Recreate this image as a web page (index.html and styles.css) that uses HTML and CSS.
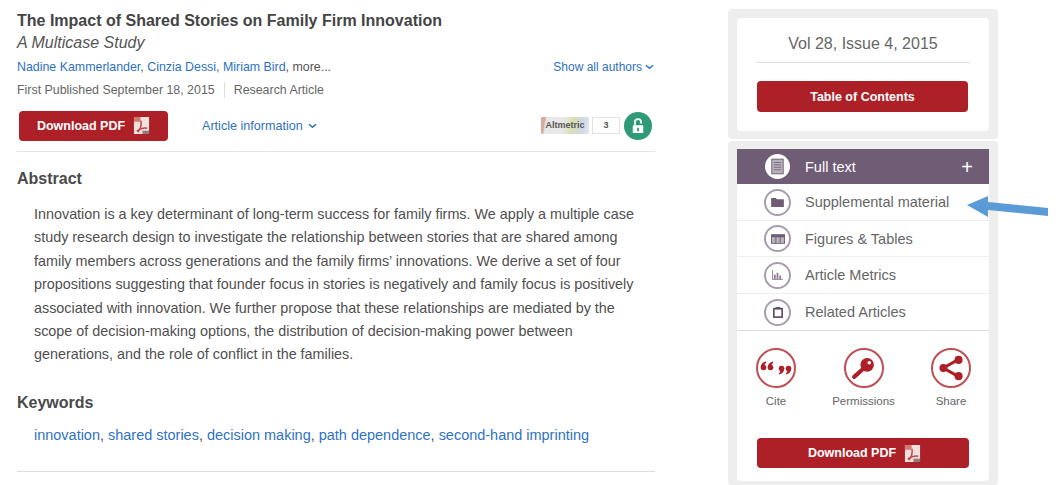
FILE: index.html
```html
<!DOCTYPE html>
<html lang="en">
<head>
<meta charset="utf-8">
<title>The Impact of Shared Stories on Family Firm Innovation</title>
<link rel="stylesheet" href="styles.css">
</head>
<body>
<div class="page">
  <main class="article">
    <h1 class="title">The Impact of Shared Stories on Family Firm Innovation</h1>
    <p class="subtitle">A Multicase Study</p>
    <div class="authors">
      <span class="names"><a>Nadine Kammerlander</a>, <a>Cinzia Dessi</a>, <a>Miriam Bird</a>, more...</span>
      <a class="show-all">Show all authors<svg class="chev" viewBox="0 0 10 6"><path d="M1 1l4 3.500L9 1" fill="none" stroke="currentColor" stroke-width="1.600"/></svg></a>
    </div>
    <div class="published"><span>First Published September 18, 2015</span><span class="type">Research Article</span></div>
    <div class="actions">
      <button class="btn btn-main">Download PDF
        <svg class="pdf" viewBox="0 0 18 20"><rect x="1" y="1" width="16" height="18" fill="#efe0dc"/><rect x="1" y="1" width="7" height="5" fill="#d07a74"/><path d="M5 17c3-3 4-8 3.500-12M4 16c4-3 8-4 11-3" fill="none" stroke="#c0454a" stroke-width="1.600"/><rect x="10" y="15.500" width="7" height="3.500" fill="#8b7f7d"/></svg>
      </button>
      <a class="info">Article information<svg class="chev" viewBox="0 0 10 6"><path d="M1 1l4 3.500L9 1" fill="none" stroke="currentColor" stroke-width="1.600"/></svg></a>
      <div class="metrics">
        <span class="alt">Altmetric</span><span class="count">3</span>
        <span class="lock"><svg viewBox="0 0 16 20" width="14" height="18"><path d="M4.500 9V5.500a3.500 3.500 0 0 1 7 0V7" fill="none" stroke="#fff" stroke-width="2"/><rect x="2" y="9" width="12" height="9" rx="1" fill="#fff"/><rect x="7" y="12" width="2" height="4" fill="#2f9a78"/></svg></span>
      </div>
    </div>
    <section class="block abstract">
      <h2 class="heading">Abstract</h2>
      <p class="abstract-text">Innovation is a key determinant of long-term success for family firms. We apply a multiple case<br>study research design to investigate the relationship between stories that are shared among<br>family members across generations and the family firms’ innovations. We derive a set of four<br>propositions suggesting that founder focus in stories is negatively and family focus is positively<br>associated with innovation. We further propose that these relationships are mediated by the<br>scope of decision-making options, the distribution of decision-making power between<br>generations, and the role of conflict in the families.</p>
    </section>
    <section class="block keywords">
      <h2 class="heading">Keywords</h2>
      <p class="kw"><a>innovation</a>, <a>shared stories</a>, <a>decision making</a>, <a>path dependence</a>, <a>second-hand imprinting</a></p>
    </section>
  </main>

  <aside class="side">
    <div class="panel panel-top">
      <div class="card card-issue">
        <div class="issue">Vol 28, Issue 4, 2015</div>
        <button class="btn btn-toc">Table of Contents</button>
      </div>
    </div>
    <div class="panel panel-bottom">
      <div class="card card-nav">
        <ul class="nav">
          <li class="nav-item active">
            <span class="ico"><svg viewBox="0 0 16 20" width="13" height="17"><rect x="1" y="1" width="14" height="18" fill="#b9b2bb" stroke="#6f5d75" stroke-width="1.200"/><path d="M3.500 5h9M3.500 8h9M3.500 11h9M3.500 14h9" stroke="#6f5d75" stroke-width="1"/></svg></span>
            <span>Full text</span><span class="plus">+</span>
          </li>
          <li class="nav-item">
            <span class="ico"><svg viewBox="0 0 14 11" width="13" height="10"><path d="M0 1h5l1.500 1.500H14V11H0z" fill="#6f5d75"/></svg></span>
            <span>Supplemental material</span>
          </li>
          <li class="nav-item">
            <span class="ico"><svg viewBox="0 0 16 11" width="14" height="10"><rect width="16" height="11" fill="#6f5d75"/><path d="M1 3.500h14V10H1z" fill="#b9b2bb"/><path d="M5.500 3v8M10.500 3v8" stroke="#6f5d75"/></svg></span>
            <span>Figures &amp; Tables</span>
          </li>
          <li class="nav-item">
            <span class="ico"><svg viewBox="0 0 12 11" width="11" height="10"><path d="M.5 0v10.500H12" fill="none" stroke="#8d7f93"/><path d="M2 5h2v5H2zM5 3h2v7H5zM8 6h2v4H8z" fill="#8d7f93"/></svg></span>
            <span>Article Metrics</span>
          </li>
          <li class="nav-item">
            <span class="ico"><svg viewBox="0 0 12 13" width="10" height="11"><rect x="1" y="2" width="10" height="10" fill="none" stroke="#5f4f66" stroke-width="2"/><rect x="3" y="0" width="6" height="2" fill="#5f4f66"/></svg></span>
            <span>Related Articles</span>
          </li>
        </ul>
        <div class="tools">
          <div class="tool"><span class="circle"><svg viewBox="0 0 32 14" width="32" height="14"><g fill="#ad2028"><circle cx="3.500" cy="6.500" r="2.800"/><path d="M.8 6C1 3 3 1 6 .5l.3 1.200C4.800 2.400 4.400 3.600 4.800 6z"/><circle cx="10.500" cy="6.500" r="2.800"/><path d="M7.800 6C8 3 10 1 13 .5l.3 1.200C11.800 2.400 11.400 3.600 11.800 6z"/><circle cx="21.500" cy="7.500" r="2.800"/><path d="M24.200 8C24 11 22 13 19 13.500l-.3-1.200c1.500-.7 1.900-1.900 1.500-4.300z"/><circle cx="28.500" cy="7.500" r="2.800"/><path d="M31.200 8C31 11 29 13 26 13.500l-.3-1.200c1.500-.7 1.900-1.900 1.500-4.300z"/></g></svg></span><span>Cite</span></div>
          <div class="tool"><span class="circle"><svg viewBox="0 0 24 24" width="25" height="25"><circle cx="15.500" cy="8.500" r="6.500" fill="#ad2028"/><circle cx="17.500" cy="6.500" r="1.700" fill="#fff"/><path d="M11 13l-8 7" stroke="#ad2028" stroke-width="4" stroke-linecap="round"/></svg></span><span>Permissions</span></div>
          <div class="tool"><span class="circle"><svg viewBox="0 0 24 24" width="26" height="26"><path d="M19 4L5 12l14 8" fill="none" stroke="#ad2028" stroke-width="2.800"/><circle cx="19" cy="4.500" r="3.700" fill="#ad2028"/><circle cx="5" cy="12" r="3.700" fill="#ad2028"/><circle cx="19" cy="19.500" r="3.700" fill="#ad2028"/></svg></span><span>Share</span></div>
        </div>
        <button class="btn btn-side">Download PDF
          <svg class="pdf" viewBox="0 0 18 20"><rect x="1" y="1" width="16" height="18" fill="#efe0dc"/><rect x="1" y="1" width="7" height="5" fill="#d07a74"/><path d="M5 17c3-3 4-8 3.500-12M4 16c4-3 8-4 11-3" fill="none" stroke="#c0454a" stroke-width="1.600"/><rect x="10" y="15.500" width="7" height="3.500" fill="#8b7f7d"/></svg>
        </button>
      </div>
    </div>
  </aside>
</div>
<svg class="arrow" viewBox="0 0 84 24" width="84" height="24"><path d="M1 10L22 1v6l60 6v8l-60-6v7z" fill="#5b9bd5"/></svg>
</body>
</html>
```
FILE: styles.css
```css
* { box-sizing: border-box; }
html, body { margin: 0; padding: 0; background: #fff; }
body {
  position: relative;
  width: 1058px;
  height: 485px;
  overflow: hidden;
  font-family: "Liberation Sans", Arial, sans-serif;
  color: #555;
}
a { color: #2f72c4; }
.page { display: flex; align-items: flex-start; height: 485px; overflow: hidden; }
.article { width: 638px; margin-left: 17px; padding-top: 10px; flex: none; }
.title { margin: 0; font-size: 16px; line-height: 21px; font-weight: 700; color: #444; }
.subtitle { margin: 2px 0 0; font-size: 16px; line-height: 20px; font-style: italic; color: #555; }
.authors { display: flex; justify-content: space-between; margin-top: 6px; font-size: 12.400px; line-height: 16px; }
.show-all { font-size: 12px; display: inline-flex; align-items: center; gap: 3px; margin-right: 1px; }
.chev { width: 9px; height: 6px; }
.published { display: flex; margin-top: 7px; font-size: 12.400px; line-height: 16px; color: #666; }
.type { margin-left: 9px; padding-left: 9px; border-left: 1px solid #ddd; }
.actions { display: flex; align-items: center; height: 51px; margin-top: 3px; padding-bottom: 1px; border-bottom: 1px solid #e4e4e4; }
.btn {
  display: flex; align-items: center; justify-content: center;
  border: 0; border-radius: 4px; background: #ad2028; color: #fff;
  font-family: inherit; font-size: 12.500px; font-weight: 700;
}
.btn-main { width: 149px; height: 30px; margin-left: 2px; gap: 8px; }
.pdf { width: 17px; height: 19px; }
.info { margin-left: 34px; font-size: 12.600px; display: inline-flex; align-items: center; gap: 5px; }
.metrics { margin-left: auto; margin-right: 3px; display: flex; align-items: center; }
.alt {
  width: 48px; height: 17px; font-size: 9px; font-weight: 700; line-height: 17px; text-align: center; color: #555;
  background: linear-gradient(100deg, #d9a9a0 0 4px, #e8e8e8 6px 45%, #d8dfb0 65%, #cfd7e8 85%, #e8e8e8); border-radius: 1px;
}
.count { width: 28px; height: 17px; margin-left: 3px; border: 1px solid #e2e2e2; font-size: 9px; font-weight: 700; line-height: 15px; text-align: center; }
.lock { width: 28px; height: 28px; margin-left: 4px; border-radius: 50%; background: #2f9a78; display: flex; align-items: center; justify-content: center; }
.heading { margin: 0; font-size: 16px; line-height: 20px; font-weight: 700; color: #4a4a4a; }
.abstract { margin-top: 17px; }
.abstract-text { margin: 14px 0 0 17px; font-size: 14.360px; line-height: 23.400px; color: #4f4f4f; white-space: nowrap; }
.keywords { margin-top: 26px; height: 79px; border-bottom: 1px solid #ddd; }
.kw { margin: 12px 0 0 17px; font-size: 14.470px; line-height: 20px; color: #4f4f4f; }
.side { width: 270px; margin-left: 73px; margin-top: 9px; flex: none; }
.panel { background: #eee; padding: 9px 9px 0; border-radius: 4px; }
.panel-top { height: 130px; }
.panel-bottom { margin-top: 2px; height: 344px; padding-top: 8px; }
.card { background: #fff; border-radius: 4px; }
.card-issue { height: 113px; padding: 0 20px; }
.card-nav { height: 332px; }
.issue { height: 45px; margin: 0 -1px; padding-top: 17px; font-size: 16px; line-height: 18px; text-align: center; color: #666; border-bottom: 1px solid #ddd; }
.btn-toc { width: 211px; height: 31px; margin-top: 18px; }
.nav { list-style: none; margin: 0; padding: 0; border-bottom: 1px solid #ddd; }
.nav-item { display: flex; align-items: center; height: 36.500px; padding: 1px 16px 0 27px; font-size: 14.500px; color: #666; border-bottom: 1px solid #eee; }
.nav-item:last-child { border-bottom: 0; }
.nav-item.active { height: 35px; padding-top: 0; background: #6f5d75; color: #fff; border-bottom: 0; }
.ico { width: 27px; height: 27px; margin-right: 14px; border: 2px solid #a79dad; border-radius: 50%; display: flex; align-items: center; justify-content: center; }
.active .ico { width: 25px; height: 25px; margin: 0 15px 0 1px; background: #fff; border-color: #fff; }
.plus { margin-left: auto; font-size: 20px; font-weight: 400; line-height: 20px; }
.tools { display: flex; justify-content: space-between; padding: 17px 6px 0 7px; }
.tool { width: 64px; display: flex; flex-direction: column; align-items: center; font-size: 11.500px; line-height: 16px; color: #666; white-space: nowrap; }
.circle { width: 40px; height: 40px; margin-bottom: 5px; border: 2px solid #bd4f55; border-radius: 50%; display: flex; align-items: center; justify-content: center; }
.btn-side { width: 212px; height: 30px; margin: 29px 0 0 20px; padding-left: 9px; gap: 8px; }
.arrow { position: absolute; left: 966px; top: 195px; }
```
